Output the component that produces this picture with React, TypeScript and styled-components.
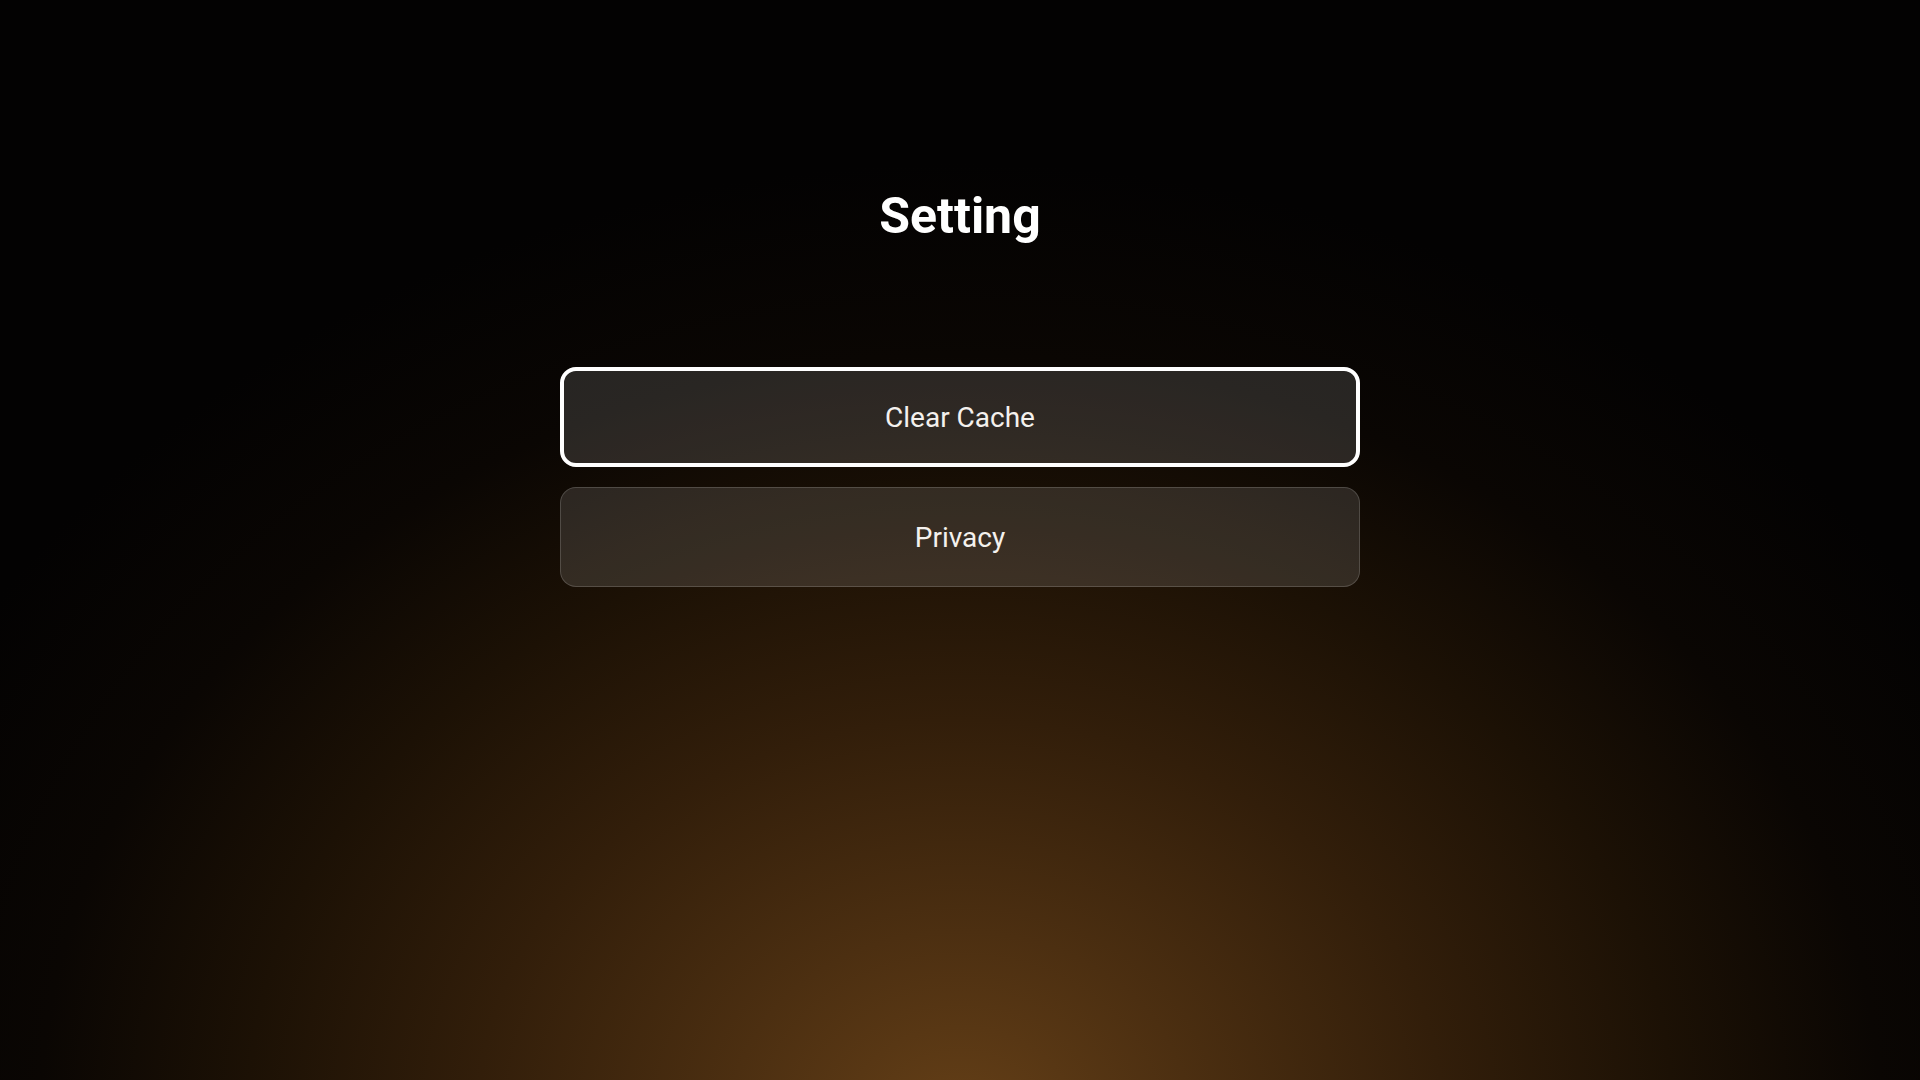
import React from "react";
import styled, { createGlobalStyle } from "styled-components";

const GlobalStyle = createGlobalStyle`
  html, body {
    margin: 0;
    padding: 0;
    height: 100%;
    background: #000;
  }
  body {
    font-family: Roboto, "Noto Sans", "Liberation Sans", sans-serif;
    -webkit-font-smoothing: antialiased;
  }
  #root {
    min-height: 100vh;
  }
`;

const Page = styled.main`
  box-sizing: border-box;
  min-height: 100vh;
  width: 100%;
  display: flex;
  flex-direction: column;
  align-items: center;
  padding-top: 188px;
  background:
    radial-gradient(
      ellipse 1150px 960px at 50% 104%,
      #643f17 0%,
      #4c2f11 20%,
      #321e0a 42%,
      #1c1105 62%,
      #0a0603 80%,
      #030202 100%
    ),
    #030202;
`;

const Title = styled.h1`
  margin: 0;
  font-size: 50px;
  line-height: 56px;
  font-weight: 700;
  color: #ffffff;
  letter-spacing: 0;
`;

const Menu = styled.nav`
  margin-top: 123px;
  display: flex;
  flex-direction: column;
  gap: 20px;
  width: 800px;
`;

const MenuButton = styled.button<{ $focused?: boolean }>`
  box-sizing: border-box;
  width: 100%;
  height: 100px;
  border-radius: 16px;
  border: ${(p) => (p.$focused ? "4px solid #ffffff" : "1.5px solid rgba(255,255,255,0.16)")};
  background: ${(p) => (p.$focused ? "rgba(255,255,255,0.13)" : "rgba(255,255,255,0.12)")};
  color: #f4f1ee;
  font-family: Roboto, "Noto Sans", "Liberation Sans", sans-serif;
  font-size: 28px;
  font-weight: 400;
  display: flex;
  align-items: center;
  justify-content: center;
  cursor: pointer;
  outline: none;
  padding: 0;
`;

export default function App() {
  return (
    <>
      <GlobalStyle />
      <Page>
        <Title>Setting</Title>
        <Menu>
          <MenuButton $focused>Clear Cache</MenuButton>
          <MenuButton>Privacy</MenuButton>
        </Menu>
      </Page>
    </>
  );
}
